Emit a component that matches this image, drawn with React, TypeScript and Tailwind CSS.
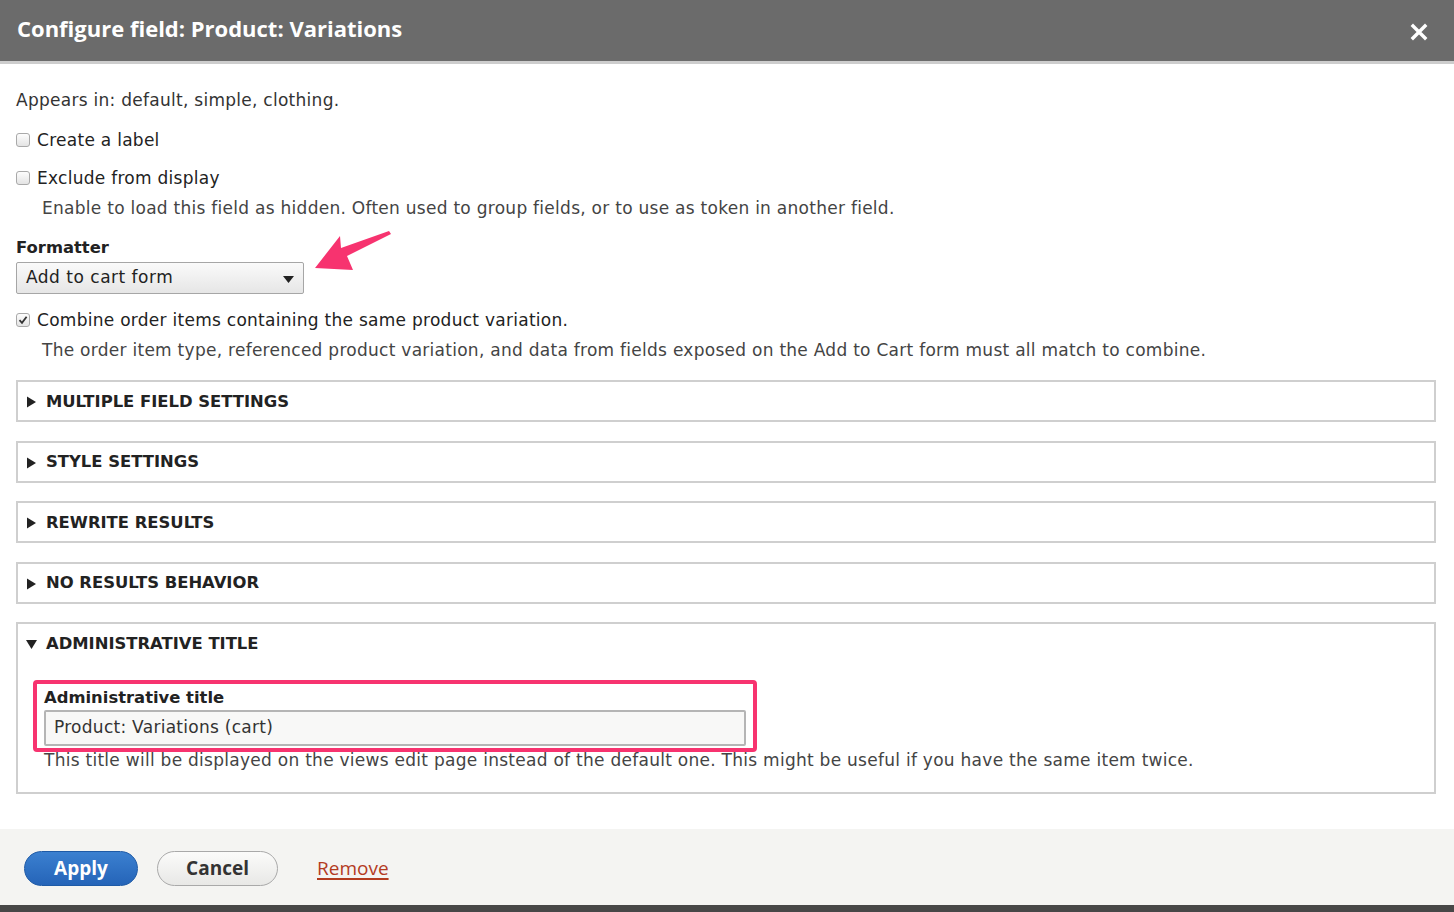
import React from 'react';

const body = { fontFamily: '"DejaVu Sans", "Open Sans", sans-serif' };
const heading = { fontFamily: '"Open Sans", "DejaVu Sans", sans-serif' };

const Checkbox: React.FC<{ checked?: boolean }> = ({ checked }) => (
  <span className="inline-flex items-center justify-center w-[14px] h-[14px] rounded-[3px] border border-[#a9a9a9] bg-gradient-to-b from-[#fdfdfd] to-[#e4e4e4] shrink-0">
    {checked && (
      <svg width="10" height="10" viewBox="0 0 10 10">
        <path d="M1.5 5.2 L4 7.8 L8.6 1.8" fill="none" stroke="#333" strokeWidth="1.8" />
      </svg>
    )}
  </span>
);

const Section: React.FC<{ title: string; open?: boolean; children?: React.ReactNode }> = ({ title, open, children }) => (
  <div className="border-2 border-[#cfcfcf] bg-white">
    <div className="flex items-center gap-[9px] h-[38px] pl-[8px] pt-[2px]">
      <svg width="11" height="12" viewBox="0 0 11 12" className="shrink-0">
        {open ? <path d="M0 2 H11 L5.5 11 Z" fill="#222" /> : <path d="M1 0.5 V11.5 L10 6 Z" fill="#222" />}
      </svg>
      <span className="text-[16.4px] font-bold text-[#222]">{title}</span>
    </div>
    {children}
  </div>
);

export default function App() {
  return (
    <div className="w-[1454px] h-[912px] bg-white flex flex-col overflow-hidden text-[#333]" style={body}>
      <header className="h-[64px] shrink-0 bg-[#6b6b6b] border-b-[3px] border-[#cdcdcd] flex items-center justify-between pl-[17px] pr-[26px]">
        <h1 className="text-[22px] font-bold text-white pb-[4px]" style={heading}>Configure field: Product: Variations</h1>
        <svg width="18" height="18" viewBox="0 0 18 18" className="mt-[2px]">
          <path d="M3 3 L15 15 M15 3 L3 15" stroke="#fff" strokeWidth="3.4" strokeLinecap="square" />
        </svg>
      </header>

      <main className="flex-1 px-[16px] pt-[24px] relative tracking-[0.27px]">
        <p className="text-[17px] leading-[24px] mb-[16px]">Appears in: default, simple, clothing.</p>

        <label className="flex items-center gap-[7px] text-[17px] leading-[24px] mb-[14px]">
          <Checkbox />
          <span className="text-[#222]">Create a label</span>
        </label>

        <label className="flex items-center gap-[7px] text-[17px] leading-[24px]">
          <Checkbox />
          <span className="text-[#222]">Exclude from display</span>
        </label>
        <p className="text-[17px] leading-[24px] text-[#444] pl-[26px] mt-[6px]">
          Enable to load this field as hidden. Often used to group fields, or to use as token in another field.
        </p>

        <div className="mt-[16px]">
          <div className="text-[16.4px] font-bold text-[#222] leading-[22px] tracking-normal pt-[1px]">Formatter</div>
          <div className="mt-[3px] w-[288px] h-[32px] border border-[#a6a6a6] rounded-[2px] bg-gradient-to-b from-[#fafafa] to-[#e6e6e6] flex items-center justify-between pl-[9px] pr-[9px]">
            <span className="text-[17px] text-[#222] tracking-[0.5px]">Add to cart form</span>
            <svg width="11" height="8" viewBox="0 0 11 8" className="mt-[4px]">
              <path d="M0 0 H11 L5.5 7 Z" fill="#222" />
            </svg>
          </div>
        </div>

        <label className="flex items-center gap-[7px] text-[17px] leading-[24px] mt-[14px]">
          <Checkbox checked />
          <span className="text-[#222]">Combine order items containing the same product variation.</span>
        </label>
        <p className="text-[17px] leading-[24px] text-[#444] pl-[26px] mt-[6px]">
          The order item type, referenced product variation, and data from fields exposed on the Add to Cart form must all match to combine.
        </p>

        <div className="flex flex-col gap-[18.5px] mt-[18px] w-[1420px] tracking-normal">
          <Section title="MULTIPLE FIELD SETTINGS" />
          <Section title="STYLE SETTINGS" />
          <Section title="REWRITE RESULTS" />
          <Section title="NO RESULTS BEHAVIOR" />
          <Section title="ADMINISTRATIVE TITLE" open>
            <div className="px-[26px] pt-[25px] pb-[20px] tracking-[0.27px]">
              <div className="text-[16.4px] font-bold text-[#222] leading-[22px] tracking-normal">Administrative title</div>
              <div className="mt-[1px] w-[702px] h-[36px] border-2 border-[#b5b5b5] rounded-[2px] bg-[#f8f8f7] flex items-center pl-[8px]">
                <span className="text-[17px] text-[#333]">Product: Variations (cart)</span>
              </div>
              <p className="text-[17px] leading-[24px] text-[#444] mt-[2px]">
                This title will be displayed on the views edit page instead of the default one. This might be useful if you have the same item twice.
              </p>
            </div>
          </Section>
        </div>

        {/* annotation overlays */}
        <svg className="absolute left-[300px] top-[162px]" width="100" height="50" viewBox="0 0 100 50">
          <path d="M15 42 L40 10 L41 22 L89 5 L91 8 L47 30 L53 44 Z" fill="#f7336f" />
        </svg>
        <div className="absolute left-[33px] top-[616px] w-[724px] h-[72px] border-[4px] border-[#f7336f] rounded-[4px]" />
      </main>

      <footer className="h-[76px] shrink-0 bg-[#f4f4f2] flex items-center gap-[19px] pl-[24px] pt-[2px]" style={heading}>
        <button className="w-[114px] h-[35px] rounded-full border border-[#1e5aa6] bg-gradient-to-b from-[#3b80d0] to-[#2564b8] text-white text-[19px] font-bold">
          Apply
        </button>
        <button className="w-[121px] h-[35px] rounded-full border border-[#a9a9a9] bg-gradient-to-b from-[#fbfbfa] to-[#e8e8e6] text-[#333] text-[19px] font-bold">
          Cancel
        </button>
        <a className="ml-[20px] text-[19px] text-[#b33b1f] underline underline-offset-[3px] decoration-[2px]">Remove</a>
      </footer>
      <div className="h-[7px] shrink-0 bg-[#474747]" />
    </div>
  );
}
